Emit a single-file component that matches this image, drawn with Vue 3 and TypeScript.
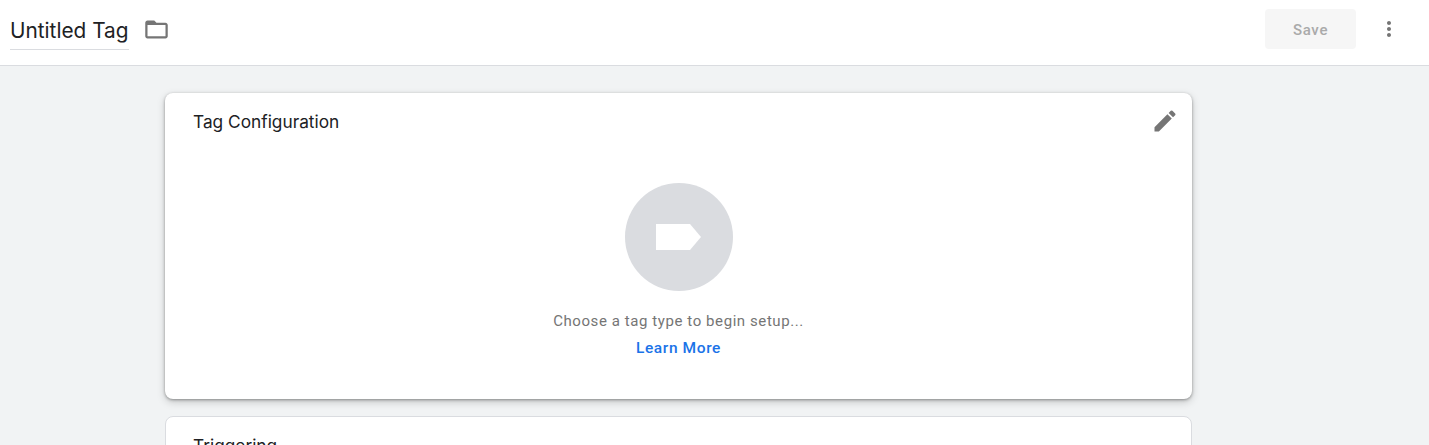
<template>
  <div class="page">
    <header class="topbar">
      <div class="title-wrap">
        <div class="title">Untitled Tag</div>
        <svg class="folder" width="27" height="27" viewBox="0 0 24 24" fill="#757575">
          <path d="M20 6h-8l-2-2H4c-1.1 0-1.99.9-1.99 2L2 18c0 1.1.9 2 2 2h16c1.1 0 2-.9 2-2V8c0-1.1-.9-2-2-2zm0 12H4V8h16v10z" />
        </svg>
      </div>
      <div class="actions">
        <button class="save" disabled>Save</button>
        <svg class="more" width="24" height="24" viewBox="0 0 24 24" fill="#757575">
          <path d="M12 8c1.1 0 2-.9 2-2s-.9-2-2-2-2 .9-2 2 .9 2 2 2zm0 2c-1.1 0-2 .9-2 2s.9 2 2 2 2-.9 2-2-.9-2-2-2zm0 6c-1.1 0-2 .9-2 2s.9 2 2 2 2-.9 2-2-.9-2-2-2z" />
        </svg>
      </div>
    </header>

    <main class="content">
      <section class="card card-active">
        <div class="card-head">
          <h2 class="card-title">Tag Configuration</h2>
          <svg class="edit" width="28" height="28" viewBox="0 0 24 24" fill="#757575">
            <path d="M3 17.25V21h3.75L17.81 9.94l-3.75-3.75L3 17.25zM20.71 7.04a1 1 0 0 0 0-1.41l-2.34-2.34a1 1 0 0 0-1.41 0l-1.83 1.83 3.75 3.75 1.83-1.83z" />
          </svg>
        </div>
        <div class="empty">
          <div class="circle">
            <svg width="46" height="26" viewBox="0 0 46 26">
              <path d="M0 0h34l11 13-11 13H0z" fill="#fff" />
            </svg>
          </div>
          <p class="hint">Choose a tag type to begin setup...</p>
          <a class="link">Learn More</a>
        </div>
      </section>

      <section class="card card-next">
        <div class="card-head">
          <h2 class="card-title">Triggering</h2>
        </div>
      </section>
    </main>
  </div>
</template>

<script setup lang="ts">
</script>

<style>
html, body {
  margin: 0;
  height: 100%;
  overflow: hidden;
  background: #f1f3f4;
}
</style>

<style scoped>
.page {
  height: 445px;
  overflow: hidden;
  font-family: Roboto, "Liberation Sans", sans-serif;
  background: #f1f3f4;
}

.topbar {
  display: flex;
  justify-content: space-between;
  align-items: center;
  height: 58px;
  box-sizing: content-box;
  background: #fff;
  border-bottom: 1px solid #dadce0;
  padding: 0 28px 7px 10px;
}

.title-wrap {
  display: flex;
  align-items: center;
  gap: 14px;
}

.title {
  margin-top: 5px;
  font-family: Inter, Roboto, sans-serif;
  font-size: 20.8px;
  color: #202124;
  padding: 1px 0;
  border-bottom: 1px solid #dadce0;
  line-height: 34px;
}

.actions {
  display: flex;
  align-items: center;
  gap: 21px;
}

.save {
  width: 91px;
  height: 40px;
  padding-top: 2px;
  border: 0;
  border-radius: 4px;
  background: #f6f6f6;
  color: #aaa;
  font: 500 15px Roboto, sans-serif;
  letter-spacing: .7px;
}

.content {
  width: 1027px;
  margin-left: 165px;
  padding-top: 27px;
}

.card {
  background: #fff;
  border: 1px solid #dadce0;
  border-radius: 8px;
  box-sizing: border-box;
  margin-bottom: 17px;
}

.card-active {
  height: 306px;
  border-color: transparent;
  box-shadow: 0 1px 3px rgba(0, 0, 0, .35), 0 3px 9px rgba(0, 0, 0, .18);
}

.card-head {
  display: flex;
  justify-content: space-between;
  padding: 16px 12px 0 27px;
}

.card-next .card-head {
  padding-top: 17px;
}

.card-title {
  margin: 0;
  font-family: Inter, Roboto, sans-serif;
  font-size: 17.3px;
  font-weight: 400;
  color: #202124;
  line-height: 24px;
}

.edit {
  margin-top: -3px;
}

.empty {
  display: flex;
  flex-direction: column;
  align-items: center;
  padding-top: 48px;
}

.circle {
  width: 108px;
  height: 108px;
  border-radius: 50%;
  background: #dadce0;
  display: flex;
  align-items: center;
  justify-content: center;
}

.hint {
  margin: 21px 0 0;
  font-size: 15px;
  color: #757575;
  letter-spacing: .58px;
  line-height: 18px;
}

.link {
  margin-top: 9px;
  font-size: 15.5px;
  font-weight: 500;
  color: #1a73e8;
  letter-spacing: .6px;
  line-height: 18px;
}
</style>
